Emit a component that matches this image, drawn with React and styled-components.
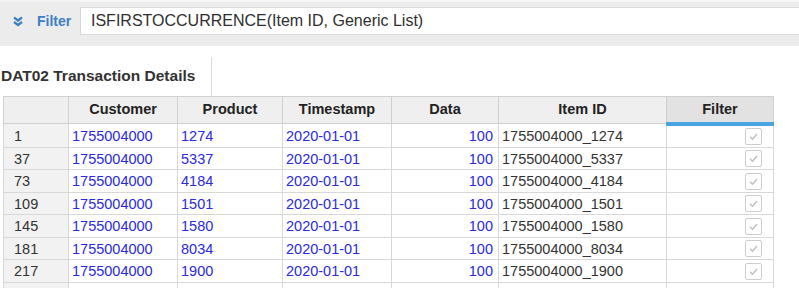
import React from 'react';
import styled, { createGlobalStyle } from 'styled-components';

const GlobalStyle = createGlobalStyle`
  html, body {
    margin: 0;
    padding: 0;
    background: #fff;
    font-family: "Liberation Sans", Arial, sans-serif;
    overflow: hidden;
  }
`;

// Style
const Page = styled.div`
  width: 799px;
  height: 288px;
  overflow: hidden;
  background: #fff;
`;

const FilterBar = styled.div`
  height: 46px;
  background: #ececec;
  border-top: 2px solid #f4f4f4;
  display: flex;
  align-items: flex-start;
  padding-top: 5px;
  box-sizing: border-box;
`;

const FilterLabel = styled.div`
  width: 80px;
  height: 28px;
  display: flex;
  align-items: center;
  padding-left: 13px;
  box-sizing: border-box;
  gap: 14px;
  color: #3d80c4;
  font-weight: bold;
  font-size: 14px;
`;

const Expression = styled.div`
  flex: 1;
  height: 28px;
  background: #fff;
  border: 1px solid #d9d9d9;
  border-right: none;
  box-sizing: border-box;
  display: flex;
  align-items: center;
  padding-left: 10px;
  font-size: 16px;
  color: #2e2e2e;
`;

const TitleRow = styled.div`
  display: flex;
  margin-top: 11px;
  height: 39px;
`;

const TitleTab = styled.div`
  width: 212px;
  border-right: 1px solid #dcdcdc;
  box-sizing: border-box;
  font-size: 15.5px;
  font-weight: bold;
  color: #333;
  padding-top: 10px;
  padding-left: 1px;
`;

const Grid = styled.table`
  margin-left: 3px;
  border-collapse: collapse;
  table-layout: fixed;
  width: 770px;
  font-size: 14.5px;
`;

const HeadCell = styled.th`
  height: 27px;
  padding: 0 0 ${p => (p.$active ? '0' : '3px')};
  box-sizing: border-box;
  background: ${p => (p.$active ? '#e2e2e2' : '#efefef')};
  border: 1px solid #d0d0d0;
  border-bottom: ${p => (p.$active ? '4px solid #4aa3df' : '1px solid #d0d0d0')};
  color: #222;
  font-weight: bold;
  text-align: center;
  vertical-align: middle;
`;

const Row = styled.tr`
  height: 22.5px;
`;

const Cell = styled.td`
  padding: 1px ${p => (p.$right ? '5px' : '3px')} 0 ${p => (p.$index ? '10px' : '3px')};
  border: 1px solid #d8d8d8;
  background: ${p => (p.$index ? '#f2f2f2' : '#fff')};
  color: ${p => (p.$link ? '#2a2ae0' : '#333')};
  text-align: ${p => (p.$right ? 'right' : 'left')};
  white-space: nowrap;
  overflow: hidden;
  line-height: 20px;
`;

const CheckBox = styled.span`
  display: inline-block;
  width: 17px;
  height: 17px;
  border: 1px solid #cdcdcd;
  border-radius: 2px;
  background: #fff;
  box-sizing: border-box;
  vertical-align: middle;
  margin-right: 6px;
  position: relative;
  top: -1px;

  svg {
    display: block;
  }
`;

const ChevronsIcon = () => (
  <svg width="10" height="11" viewBox="0 0 10 11">
    <path d="M1 1.5 L5 4.5 L9 1.5" fill="none" stroke="#3d80c4" strokeWidth="2.2" />
    <path d="M1 6 L5 9 L9 6" fill="none" stroke="#3d80c4" strokeWidth="2.2" />
  </svg>
);

const Check = () => (
  <CheckBox>
    <svg width="15" height="15" viewBox="0 0 15 15">
      <path d="M4 7.8 L6.5 10.2 L11 5" fill="none" stroke="#bdbdbd" strokeWidth="1.3" />
    </svg>
  </CheckBox>
);

const rows = [
  { n: 1, product: '1274' },
  { n: 37, product: '5337' },
  { n: 73, product: '4184' },
  { n: 109, product: '1501' },
  { n: 145, product: '1580' },
  { n: 181, product: '8034' },
  { n: 217, product: '1900' },
];

const widths = [65, 109, 105, 109, 107, 168, 107];

export default function App() {
  return (
    <Page>
      <GlobalStyle />
      <FilterBar>
        <FilterLabel>
          <ChevronsIcon />
          Filter
        </FilterLabel>
        <Expression>ISFIRSTOCCURRENCE(Item ID, Generic List)</Expression>
      </FilterBar>

      <TitleRow>
        <TitleTab>DAT02 Transaction Details</TitleTab>
      </TitleRow>

      <Grid>
        <colgroup>
          {widths.map((w, i) => <col key={i} style={{ width: w }} />)}
        </colgroup>
        <thead>
          <tr>
            <HeadCell />
            <HeadCell>Customer</HeadCell>
            <HeadCell>Product</HeadCell>
            <HeadCell>Timestamp</HeadCell>
            <HeadCell>Data</HeadCell>
            <HeadCell>Item ID</HeadCell>
            <HeadCell $active>Filter</HeadCell>
          </tr>
        </thead>
        <tbody>
          {rows.map(r => (
            <Row key={r.n}>
              <Cell $index>{r.n}</Cell>
              <Cell $link>1755004000</Cell>
              <Cell $link>{r.product}</Cell>
              <Cell $link>2020-01-01</Cell>
              <Cell $link $right>100</Cell>
              <Cell>1755004000_{r.product}</Cell>
              <Cell $right><Check /></Cell>
            </Row>
          ))}
          <Row>
            <Cell $index />
            <Cell />
            <Cell />
            <Cell />
            <Cell />
            <Cell />
            <Cell />
          </Row>
        </tbody>
      </Grid>
    </Page>
  );
}
